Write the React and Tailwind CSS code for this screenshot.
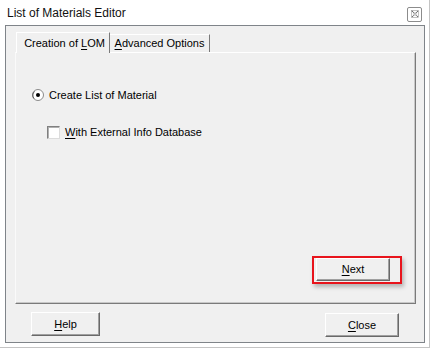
import React from 'react';

const font = { fontFamily: '"Liberation Sans", Arial, sans-serif' };

const Btn = ({ children, className = '' }) => (
  <div
    className={`flex items-center justify-center bg-[#f0f0f0] border border-t-white border-l-white border-r-[#696969] border-b-[#696969] shadow-[inset_-1px_-1px_0_#a0a0a0] text-[11px] text-black ${className}`}
  >
    {children}
  </div>
);

const Radio = () => (
  <svg width="12" height="12" viewBox="0 0 12 12">
    <circle cx="6" cy="6" r="5.5" fill="#fff" stroke="#8a8a8a" />
    <path d="M2 9.5 A5 5 0 0 1 2.5 2.5" fill="none" stroke="#5a5a5a" />
    <circle cx="6" cy="6" r="2" fill="#000" />
  </svg>
);

export default function App() {
  return (
    <div className="w-[431px] h-[351px] bg-white overflow-hidden" style={font}>
      <div className="w-[430px] h-[348px] border-r border-b border-[#c4c4c4] flex flex-col">
        {/* title bar */}
        <div className="h-[25px] flex items-center justify-between pl-[7px] pr-[7px] shrink-0">
          <span className="text-[12px] leading-[14px] text-[#111]">List of Materials Editor</span>
          <div className="mt-[3px] w-[15px] h-[15px] border border-[#8c8c8c] rounded-[2px] flex items-center justify-center bg-white">
            <svg width="8" height="8" viewBox="0 0 8 8">
              <path d="M1 1 L7 7 M7 1 L1 7" stroke="#6a6a6a" strokeWidth="1.2" strokeDasharray="1.2 0.6" />
              <rect x="0.5" y="0.5" width="7" height="7" fill="none" stroke="#9a9a9a" strokeWidth="0.6" />
            </svg>
          </div>
        </div>

        {/* frame */}
        <div className="ml-[5px] w-[420px] h-[318px] border border-[#7f8489] bg-[#f0f0f0] flex flex-col">
          <div className="pt-[7px] pl-[9px]">
            {/* tabs */}
            <div className="flex items-end h-[20px] ml-[1px] relative z-10 -mb-[1px]">
              <div className="w-[94px] h-[21px] border-l border-t border-r border-l-white border-t-white border-r-[#7a7a7a] bg-[#f0f0f0] flex items-center justify-center pl-[3px] text-[11px] text-black">
                <span>
                  Creation of <u className="underline-offset-2">L</u>OM
                </span>
              </div>
              <div className="w-[100px] h-[18px] border-t border-r border-t-white border-r-[#7a7a7a] flex items-center justify-center text-[11px] text-black mb-[1px]">
                <span>
                  <u className="underline-offset-2">A</u>dvanced Options
                </span>
              </div>
            </div>
            {/* panel */}
            <div className="w-[401px] h-[252px] border border-t-white border-l-[#fafafa] border-r-[#7a7a7a] border-b-[#7a7a7a] shadow-[inset_-1px_-1px_0_#c8c8c8] flex flex-col">
              <div className="pt-[35px] pl-[16px] flex items-center h-[14px] box-content">
                <Radio />
                <span className="ml-[5px] text-[11px] text-black leading-[14px]">Create List of Material</span>
              </div>
              <div className="mt-[23px] pl-[31px] flex items-center h-[14px]">
                <div className="w-[13px] h-[13px] bg-white border border-t-[#808080] border-l-[#808080] border-r-[#dcdcdc] border-b-[#dcdcdc] shadow-[inset_1px_1px_0_#b0b0b0]" />
                <span className="ml-[5px] text-[11px] text-black leading-[14px]">
                  <u className="underline-offset-2">W</u>ith External Info Database
                </span>
              </div>
              <div className="flex-1" />
              <div className="flex justify-end pr-[25px] pb-[22px]">
                <div className="relative">
                  <Btn className="w-[74px] h-[23px]">
                    <span><u className="underline-offset-2">N</u>ext</span>
                  </Btn>
                  <div className="absolute left-[-4px] top-[-2px] w-[90px] h-[28px] border-2 border-[#e8141c] shadow-[2px_3px_4px_rgba(0,0,0,0.25)]" />
                </div>
              </div>
            </div>
          </div>
          {/* bottom buttons */}
          <div className="mt-[8px] flex justify-between items-start pl-[25px] pr-[25px]">
            <Btn className="w-[69px] h-[24px]">
              <span><u className="underline-offset-2">H</u>elp</span>
            </Btn>
            <Btn className="w-[74px] h-[24px] mt-[1px]">
              <span><u className="underline-offset-2">C</u>lose</span>
            </Btn>
          </div>
        </div>
      </div>
    </div>
  );
}
